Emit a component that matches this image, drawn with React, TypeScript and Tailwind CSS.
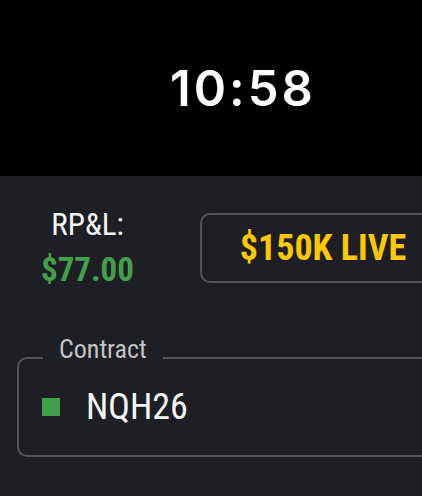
import React from "react";

export default function App() {
  return (
    <div className="w-[422px] h-[496px] overflow-hidden bg-[#1e1f24] font-['Roboto',sans-serif] font-stretch-condensed">
      <div className="h-[176px] bg-black flex items-center justify-center pl-[64px]">
        <span className="font-['Inter',sans-serif] text-[49px] font-semibold text-white tracking-[3px] leading-none">
          10:58
        </span>
      </div>

      <div className="flex items-start pt-[34px]">
        <div className="w-[175px] shrink-0 flex flex-col items-center">
          <span className="text-[31px] leading-[30px] text-[#f4f4f4]">RP&amp;L:</span>
          <span className="mt-[15px] text-[33px] leading-[30px] font-bold text-[#43a04a]">$77.00</span>
        </div>
        <div className="ml-[25px] mt-[3px] w-[246px] h-[70px] shrink-0 rounded-[10px] border-2 border-[#55565c] flex items-center justify-center">
          <span className="text-[36px] leading-none font-bold text-[#fcc800]">$150K LIVE</span>
        </div>
      </div>

      <div className="relative mt-[72px] ml-[17px] w-[430px] h-[100px] rounded-[10px] border-2 border-[#55565c]">
        <span className="absolute left-[24px] top-[-23px] px-[16px] bg-[#1e1f24] text-[26px] leading-[26px] text-[#c4c4c8]">
          Contract
        </span>
        <div className="h-full flex items-center pl-[23px] gap-[26px]">
          <div className="w-[18px] h-[18px] bg-[#43a04a]" />
          <span className="text-[36px] leading-none text-[#f4f4f4]">NQH26</span>
        </div>
      </div>
    </div>
  );
}
